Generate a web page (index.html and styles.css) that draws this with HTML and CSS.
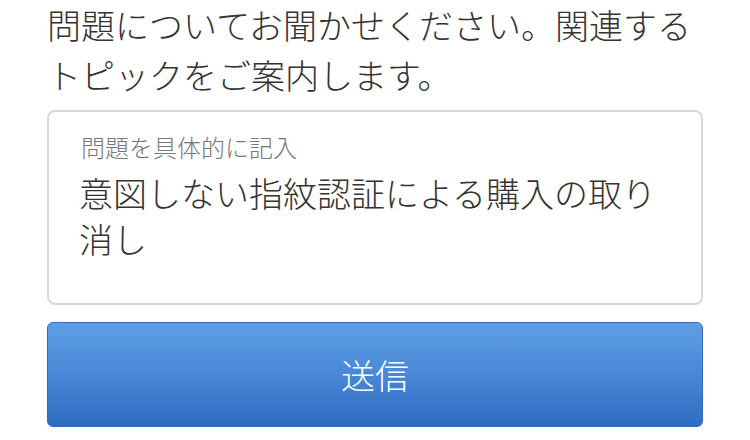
FILE: index.html
```html
<!DOCTYPE html>
<html lang="ja">
<head>
<meta charset="utf-8">
<title>問題について</title>
<link rel="stylesheet" href="styles.css">
</head>
<body>
<main class="page">
  <h1 class="intro">問題についてお聞かせください。関連するトピックをご案内します。</h1>
  <div class="field">
    <label class="field-label">問題を具体的に記入</label>
    <div class="field-value">意図しない指紋認証による購入の取り消し</div>
  </div>
  <button class="submit" type="button">送信</button>
</main>
</body>
</html>
```

FILE: styles.css
```css
html, body {
  margin: 0;
  padding: 0;
  background: #ffffff;
}

body {
  font-family: "Noto Sans CJK JP", "Noto Sans", sans-serif;
  color: #333333;
}

.page {
  display: flex;
  flex-direction: column;
  padding: 0 47px;
}

.intro {
  margin: 0;
  font-size: 34px;
  line-height: 50px;
  font-weight: 300;
  color: #333333;
}

.field {
  box-sizing: border-box;
  margin-top: 10px;
  height: 195px;
  border: 2px solid #d8d8d8;
  border-radius: 8px;
  padding: 19px 30px 0 32px;
  display: flex;
  flex-direction: column;
  gap: 8px;
}

.field-label {
  font-size: 24px;
  line-height: 31px;
  font-weight: 300;
  color: #777777;
}

.field-value {
  font-size: 34px;
  line-height: 46px;
  font-weight: 300;
  color: #333333;
  margin-left: -2px;
}

.submit {
  box-sizing: border-box;
  margin-top: 17px;
  height: 105px;
  border: 1px solid #2f6cc2;
  border-radius: 6px;
  background: linear-gradient(to bottom, #5d9fe5 0%, #4a8ad9 45%, #2f6dc0 100%);
  color: #ffffff;
  font-family: "Noto Sans CJK JP", "Noto Sans", sans-serif;
  font-size: 34px;
  font-weight: 300;
  line-height: 1;
  padding: 0;
}
```
